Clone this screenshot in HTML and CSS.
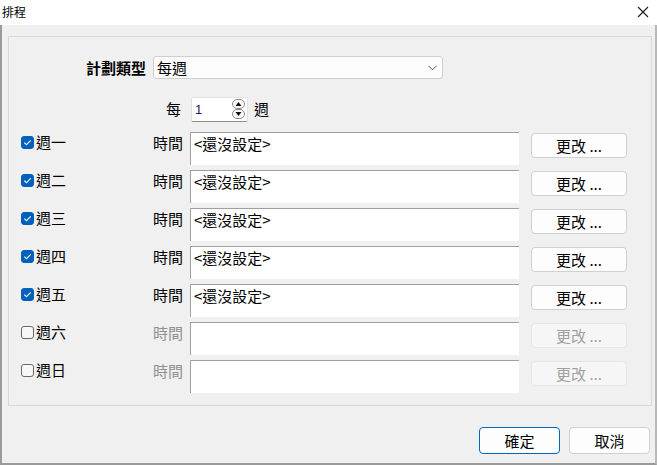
FILE: index.html
```html
<!DOCTYPE html>
<html lang="zh-Hant">
<head>
<meta charset="utf-8">
<title>排程</title>
<link rel="stylesheet" href="styles.css">
</head>
<body>
<div class="window">
  <div class="titlebar">
    <span class="title">排程</span>
    <svg class="close" width="12" height="12" viewBox="0 0 12 12"><path d="M1 1 L11 11 M11 1 L1 11" stroke="#1a1a1a" stroke-width="1.1" fill="none"/></svg>
  </div>
  <div class="client">
    <div class="group">
      <div class="row-type">
        <span class="type-label">計劃類型</span>
        <div class="combo"><span>每週</span>
          <svg width="9" height="6" viewBox="0 0 9 6"><path d="M0.5 0.8 L4.5 4.8 L8.5 0.8" stroke="#555" stroke-width="1" fill="none"/></svg>
        </div>
      </div>
      <div class="row-every">
        <span class="every-label">每</span>
        <div class="spin"><span class="spin-val">1</span>
          <div class="spin-btns">
            <svg width="13" height="20" viewBox="0 0 13 20">
              <rect x="0.5" y="0.5" width="12" height="9" rx="4.5" fill="#fafafa" stroke="#8a8a8a"/>
              <rect x="0.5" y="10.5" width="12" height="9" rx="4.5" fill="#fafafa" stroke="#8a8a8a"/>
              <path d="M3.5 7 L6.5 3 L9.5 7 Z" fill="#111"/>
              <path d="M3.5 13 L9.5 13 L6.5 17 Z" fill="#111"/>
            </svg>
          </div>
        </div>
        <span class="every-unit">週</span>
      </div>

      <div class="day">
        <label class="day-label"><span class="cb on"><svg width="13" height="13" viewBox="0 0 13 13"><path d="M3.3 6.6 L5.5 8.7 L9.7 4.4" stroke="#fff" stroke-width="1.1" fill="none"/></svg></span>週一</label>
        <span class="time-label">時間</span>
        <div class="timebox">&lt;還沒設定&gt;</div>
        <button class="btn">更改 ...</button>
      </div>
      <div class="day">
        <label class="day-label"><span class="cb on"><svg width="13" height="13" viewBox="0 0 13 13"><path d="M3.3 6.6 L5.5 8.7 L9.7 4.4" stroke="#fff" stroke-width="1.1" fill="none"/></svg></span>週二</label>
        <span class="time-label">時間</span>
        <div class="timebox">&lt;還沒設定&gt;</div>
        <button class="btn">更改 ...</button>
      </div>
      <div class="day">
        <label class="day-label"><span class="cb on"><svg width="13" height="13" viewBox="0 0 13 13"><path d="M3.3 6.6 L5.5 8.7 L9.7 4.4" stroke="#fff" stroke-width="1.1" fill="none"/></svg></span>週三</label>
        <span class="time-label">時間</span>
        <div class="timebox">&lt;還沒設定&gt;</div>
        <button class="btn">更改 ...</button>
      </div>
      <div class="day">
        <label class="day-label"><span class="cb on"><svg width="13" height="13" viewBox="0 0 13 13"><path d="M3.3 6.6 L5.5 8.7 L9.7 4.4" stroke="#fff" stroke-width="1.1" fill="none"/></svg></span>週四</label>
        <span class="time-label">時間</span>
        <div class="timebox">&lt;還沒設定&gt;</div>
        <button class="btn">更改 ...</button>
      </div>
      <div class="day">
        <label class="day-label"><span class="cb on"><svg width="13" height="13" viewBox="0 0 13 13"><path d="M3.3 6.6 L5.5 8.7 L9.7 4.4" stroke="#fff" stroke-width="1.1" fill="none"/></svg></span>週五</label>
        <span class="time-label">時間</span>
        <div class="timebox">&lt;還沒設定&gt;</div>
        <button class="btn">更改 ...</button>
      </div>
      <div class="day">
        <label class="day-label"><span class="cb"></span>週六</label>
        <span class="time-label disabled">時間</span>
        <div class="timebox"></div>
        <button class="btn disabled">更改 ...</button>
      </div>
      <div class="day">
        <label class="day-label"><span class="cb"></span>週日</label>
        <span class="time-label disabled">時間</span>
        <div class="timebox"></div>
        <button class="btn disabled">更改 ...</button>
      </div>
    </div>
    <div class="footer">
      <button class="fbtn primary">確定</button>
      <button class="fbtn">取消</button>
    </div>
  </div>
</div>
</body>
</html>
```

FILE: styles.css
```css
* { box-sizing: border-box; }
html, body { margin: 0; padding: 0; }
body {
  width: 657px;
  height: 465px;
  overflow: hidden;
  font-family: "Noto Sans CJK TC", "Noto Sans", sans-serif;
  font-size: 15px;
  color: #000;
  background: #f0f0f0;
}
.window { width: 657px; height: 465px; display: flex; flex-direction: column; }
.titlebar {
  height: 25px;
  background: #fff;
  display: flex;
  align-items: center;
  justify-content: space-between;
  padding: 0 8px 0 2px;
  flex: none;
}
.title { font-size: 12px; line-height: 14px; margin-top: -2px; }
.close { margin-top: -1px; }
.client {
  flex: 1;
  background: #f0f0f0;
  border-left: 2px solid #9a9a9a;
  border-right: 2px solid #b8b8b8;
  border-bottom: 2px solid #9a9a9a;
  padding: 11px 3px 0 6px;
  display: flex;
  flex-direction: column;
}
.group {
  height: 370px;
  border: 1px solid #d8d8d8;
  display: flex;
  flex-direction: column;
  padding-top: 19px;
}
.row-type { display: flex; align-items: center; height: 23px; }
.type-label {
  width: 137px;
  text-align: right;
  font-weight: bold;
  line-height: 20px;
}
.combo {
  margin-left: 7px;
  width: 290px;
  height: 23px;
  background: #fdfdfd;
  border: 1px solid #cfcfcf;
  border-radius: 3px;
  display: flex;
  align-items: center;
  justify-content: space-between;
  padding: 0 5px 0 3px;
  line-height: 20px;
}
.row-every { display: flex; align-items: center; height: 24px; margin-top: 18px; }
.every-label { width: 172px; text-align: right; line-height: 20px; }
.spin {
  margin-left: 10px;
  width: 57px;
  height: 25px;
  background: #fff;
  border: 1px solid #e2e2e2;
  border-bottom-color: #8c8c8c;
  border-radius: 2px;
  display: flex;
  align-items: center;
  justify-content: space-between;
  padding: 0 2px 0 3px;
}
.spin-val { font-size: 13px; font-family: "Liberation Sans", sans-serif; color: #1a1a60; }
.spin-btns { display: flex; }
.every-unit { margin-left: 6px; line-height: 20px; }

.day {
  display: flex;
  align-items: flex-start;
  height: 33px;
  padding-left: 12px;
}
.row-every + .day { margin-top: 11px; }
.day + .day { margin-top: 5px; }
.day-label {
  width: 132px;
  display: flex;
  align-items: center;
  line-height: 20px;
  padding-top: 0;
}
.cb {
  width: 13px;
  height: 13px;
  border-radius: 3px;
  border: 1px solid #6a6a6a;
  background: #f7f7f7;
  margin-right: 2px;
  flex: none;
  display: flex;
}
.cb.on { background: #0061bd; border-color: #0061bd; }
.cb svg { margin: -1px; }
.time-label { width: 30px; line-height: 20px; padding-top: 1px; box-sizing: content-box; height: 20px; }
.time-label.disabled { color: #8f8f8f; }
.timebox {
  margin-left: 7px;
  width: 329px;
  height: 33px;
  background: #fff;
  border-top: 1px solid #a0a0a0;
  border-left: 1px solid #a0a0a0;
  padding: 1px 3px;
  line-height: 20px;
}
.btn {
  margin-left: 12px;
  margin-top: 1px;
  width: 96px;
  height: 25px;
  background: #fdfdfd;
  border: 1px solid #d0d0d0;
  border-radius: 4px;
  font-family: inherit;
  font-size: 15px;
  line-height: 20px;
  color: #000;
  padding: 0;
}
.btn.disabled { background: #f6f6f6; border-color: #e6e6e6; color: #a0a0a0; }

.footer {
  display: flex;
  justify-content: flex-end;
  gap: 9px;
  margin-top: 21px;
  padding-right: 2px;
}
.fbtn {
  width: 81px;
  height: 27px;
  background: #fdfdfd;
  border: 1px solid #d0d0d0;
  border-radius: 4px;
  font-family: inherit;
  font-size: 15px;
  line-height: 20px;
  color: #000;
  padding: 0;
}
.fbtn.primary { border-color: #0067c0; }
```
